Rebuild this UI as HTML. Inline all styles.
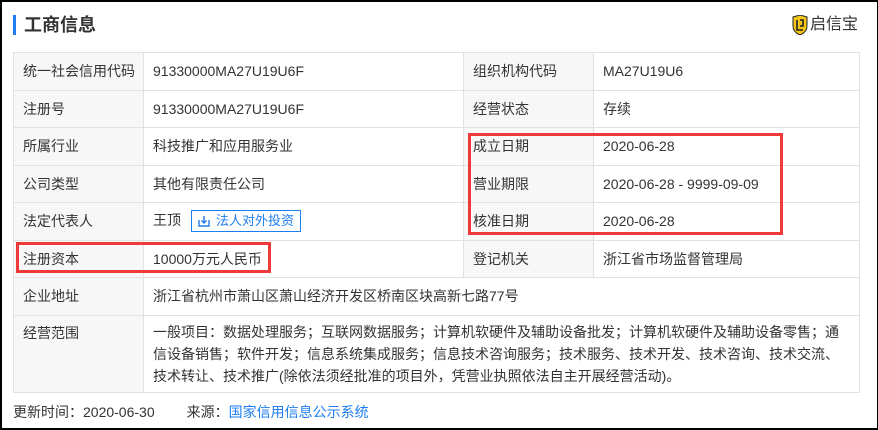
<!DOCTYPE html>
<html><head><meta charset="utf-8"><style>
*{margin:0;padding:0;box-sizing:border-box}
body{width:878px;height:430px;background:#fff;font-family:"Liberation Sans","Noto Sans CJK SC",sans-serif;color:#333;position:relative;overflow:hidden}
.frame{position:absolute;left:0;top:0;width:878px;height:430px;border:2px solid #000;border-right-width:1px}
.bar{position:absolute;left:13px;top:15px;width:3px;height:20px;background:#1e7ef0}
.title{position:absolute;left:24px;top:12px;font-size:18px;line-height:26px;font-weight:bold;color:#333}
.logo{position:absolute;left:792px;top:13px;font-size:16px;line-height:24px;color:#333;display:flex;align-items:center;gap:2px}
table{position:absolute;left:13px;top:52px;width:846px;border-collapse:collapse;font-size:14px;table-layout:fixed}
td{border:1px solid #e2e2e2;padding:0 9px;height:37.5px;vertical-align:middle;white-space:nowrap}
td.l,td.l2{background:#f7f7f7}
.btn{display:inline-block;margin-left:10px;border:1px solid #1e7ef0;color:#1e7ef0;font-size:13px;height:22px;line-height:20px;padding:0 6px 0 24px;position:relative;vertical-align:middle}
.btn svg{position:absolute;left:6px;top:4px}
td.scope{line-height:22px;padding-top:5px;padding-bottom:5px;height:76px;white-space:normal}
.red{position:absolute;border:3px solid #f03a3a}
.foot{position:absolute;left:13px;top:403px;font-size:14px;line-height:18px}
.foot a{color:#1e7ef0;text-decoration:none}
</style></head><body>
<div class="frame"></div>
<div class="bar"></div>
<div class="title">工商信息</div>
<div class="logo"><svg width="16" height="20" viewBox="0 0 16 20"><path d="M1 2 L8 0 L15 2 L15 11 Q15 17 8 20 Q1 17 1 11Z" fill="#f5c518" stroke="#222" stroke-width="1"/><path d="M5 5 V15 H11 M8 5 H11 V11 H8" fill="none" stroke="#222" stroke-width="1.6"/></svg>启信宝</div>
<table>
<colgroup><col style="width:130px"><col style="width:320px"><col style="width:130px"><col style="width:266px"></colgroup>
<tr><td class="l">统一社会信用代码</td><td>91330000MA27U19U6F</td><td class="l2">组织机构代码</td><td>MA27U19U6</td></tr>
<tr><td class="l">注册号</td><td>91330000MA27U19U6F</td><td class="l2">经营状态</td><td>存续</td></tr>
<tr><td class="l">所属行业</td><td>科技推广和应用服务业</td><td class="l2">成立日期</td><td>2020-06-28</td></tr>
<tr><td class="l">公司类型</td><td>其他有限责任公司</td><td class="l2">营业期限</td><td>2020-06-28 - 9999-09-09</td></tr>
<tr><td class="l">法定代表人</td><td>王顶<span class="btn"><svg width="12" height="12" viewBox="0 0 12 12"><path d="M1 5 V11 H11 V5 M6 1 V8 M3.5 5.5 L6 8 L8.5 5.5" fill="none" stroke="#1e7ef0" stroke-width="1.4"/></svg>法人对外投资</span></td><td class="l2">核准日期</td><td>2020-06-28</td></tr>
<tr><td class="l">注册资本</td><td>10000万元人民币</td><td class="l2">登记机关</td><td>浙江省市场监督管理局</td></tr>
<tr><td class="l">企业地址</td><td colspan="3">浙江省杭州市萧山区萧山经济开发区桥南区块高新七路77号</td></tr>
<tr><td class="l" style="vertical-align:top;padding-top:7px">经营范围</td><td colspan="3" class="scope">一般项目：数据处理服务；互联网数据服务；计算机软硬件及辅助设备批发；计算机软硬件及辅助设备零售；通信设备销售；软件开发；信息系统集成服务；信息技术咨询服务；技术服务、技术开发、技术咨询、技术交流、技术转让、技术推广(除依法须经批准的项目外，凭营业执照依法自主开展经营活动)。</td></tr>
</table>
<div class="red" style="left:468px;top:133px;width:315px;height:102px"></div>
<div class="red" style="left:16px;top:242px;width:255px;height:31px"></div>
<div class="foot">更新时间：2020-06-30<span style="display:inline-block;width:32px"></span>来源：<a>国家信用信息公示系统</a></div>
</body></html>
